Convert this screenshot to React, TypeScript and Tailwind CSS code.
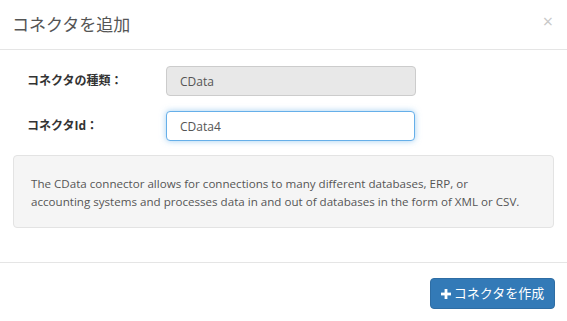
import React from "react";

const font = {
  fontFamily: '"Open Sans", "Noto Sans CJK JP", sans-serif',
};

export default function App() {
  return (
    <div className="h-[321px] w-[567px] bg-white text-[#333]" style={font}>
      <div className="flex h-[50px] items-center justify-between border-b border-[#e5e5e5] pl-[12px] pr-[14px]">
        <h4 className="text-[17px] font-normal text-[#555]">コネクタを追加</h4>
        <button type="button" className="pb-[8px] text-[18px] leading-none text-[#c8c8c8]">
          ×
        </button>
      </div>

      <div className="h-[212px] px-[13px] pt-[16px]">
        <div className="flex items-center">
          <label className="w-[153px] pl-[14px] text-[12px] font-bold text-[#333]">
            コネクタの種類：
          </label>
          <input
            disabled
            value="CData"
            readOnly
            className="h-[30px] w-[250px] rounded-[4px] border border-[#ccc] bg-[#e8e8e8] px-[13px] text-[12px] text-[#555]"
          />
        </div>

        <div className="mt-[15px] flex items-center">
          <label className="w-[153px] pl-[14px] text-[12px] font-bold text-[#333]">
            コネクタId：
          </label>
          <input
            defaultValue="CData4"
            className="h-[30px] w-[249px] rounded-[4px] border border-[#66afe9] bg-white px-[13px] text-[12px] text-[#555] shadow-[0_0_6px_rgba(102,175,233,0.6)] outline-none"
          />
        </div>

        <div className="mt-[14px] h-[73px] rounded-[4px] border border-[#e3e3e3] bg-[#f5f5f5] px-[17px] pt-[19px] text-[11.6px] leading-[18px] text-[#555]">
          The CData connector allows for connections to many different databases, ERP, or
          <br />
          accounting systems and processes data in and out of databases in the form of XML or CSV.
        </div>
      </div>

      <div className="flex justify-end border-t border-[#e5e5e5] pr-[12px] pt-[15px]">
        <button
          type="button"
          className="flex h-[31px] w-[125px] items-center justify-center gap-[3px] rounded-[4px] border border-[#2e6da4] bg-[#337ab7] text-[13px] text-white"
        >
          <svg width="10" height="10" viewBox="0 0 10 10" fill="white">
            <rect x="3.6" y="0" width="2.8" height="10" />
            <rect x="0" y="3.6" width="10" height="2.8" />
          </svg>
          コネクタを作成
        </button>
      </div>
    </div>
  );
}
